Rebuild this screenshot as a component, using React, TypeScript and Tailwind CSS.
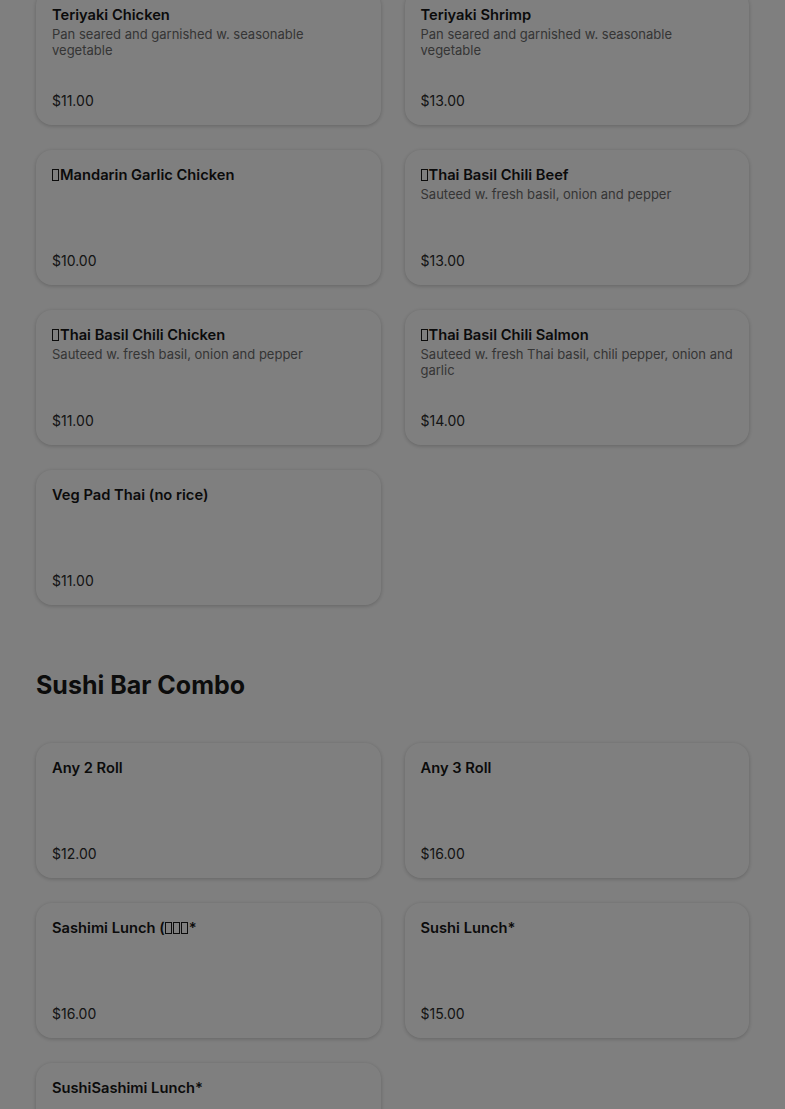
type Item = { name: string; desc?: string; price: string; boxes?: number; tail?: string };

const lunchItems: Item[] = [
  { name: "Teriyaki Chicken", desc: "Pan seared and garnished w. seasonable vegetable", price: "$11.00" },
  { name: "Teriyaki Shrimp", desc: "Pan seared and garnished w. seasonable vegetable", price: "$13.00" },
  { name: "Mandarin Garlic Chicken", price: "$10.00", boxes: 1 },
  { name: "Thai Basil Chili Beef", desc: "Sauteed w. fresh basil, onion and pepper", price: "$13.00", boxes: 1 },
  { name: "Thai Basil Chili Chicken", desc: "Sauteed w. fresh basil, onion and pepper", price: "$11.00", boxes: 1 },
  { name: "Thai Basil Chili Salmon", desc: "Sauteed w. fresh Thai basil, chili pepper, onion and garlic", price: "$14.00", boxes: 1 },
  { name: "Veg Pad Thai (no rice)", price: "$11.00" },
];

const sushiCombo: Item[] = [
  { name: "Any 2 Roll", price: "$12.00" },
  { name: "Any 3 Roll", price: "$16.00" },
  { name: "Sashimi Lunch (", price: "$16.00", boxes: 3, tail: "*" },
  { name: "Sushi Lunch*", price: "$15.00" },
  { name: "SushiSashimi Lunch*", price: "$18.00" },
];

// missing-glyph box, as the original page shows for its emoji / CJK chars
function Tofu() {
  return (
    <span
      aria-hidden
      className="inline-block w-[7px] h-[12px] border border-[#191919] mr-px align-[-1px]"
    />
  );
}

function Title({ item }: { item: Item }) {
  const boxes = Array.from({ length: item.boxes ?? 0 }, (_, i) => <Tofu key={i} />);
  return (
    <h3 className="text-[14.7px] leading-5 font-semibold text-[#161616]">
      {item.tail ? (
        <>
          {item.name}
          {boxes}
          {item.tail}
        </>
      ) : (
        <>
          {boxes}
          {item.name}
        </>
      )}
    </h3>
  );
}

function MenuCard({ item }: { item: Item }) {
  return (
    <div className="h-[135px] rounded-2xl bg-white shadow-[0_1px_4px_rgba(0,0,0,0.22)] px-4 pt-[15px] pb-[14px] flex flex-col justify-between">
      <div>
        <Title item={item} />
        {item.desc && (
          <p className="mt-px text-[13px] leading-4 text-[#6b6b6b]">{item.desc}</p>
        )}
      </div>
      <span className="text-[14px] leading-5 text-[#2a2a2a]">{item.price}</span>
    </div>
  );
}

export default function App() {
  return (
    <div
      className="h-screen bg-white overflow-hidden"
      style={{ fontFamily: "Inter, 'Noto Sans', sans-serif" }}
    >
      <div className="px-9 -mt-[10px]">
        <div className="grid grid-cols-2 gap-x-6 gap-y-[25px]">
          {lunchItems.map((item) => (
            <MenuCard key={item.name} item={item} />
          ))}
        </div>

        <h2 className="mt-16 mb-[42px] text-[25px] leading-8 font-bold text-[#191919]">
          Sushi Bar Combo
        </h2>

        <div className="grid grid-cols-2 gap-x-6 gap-y-[25px]">
          {sushiCombo.map((item) => (
            <MenuCard key={item.name} item={item} />
          ))}
        </div>
      </div>

      {/* modal backdrop */}
      <div className="fixed inset-0 bg-black/50" />
    </div>
  );
}
